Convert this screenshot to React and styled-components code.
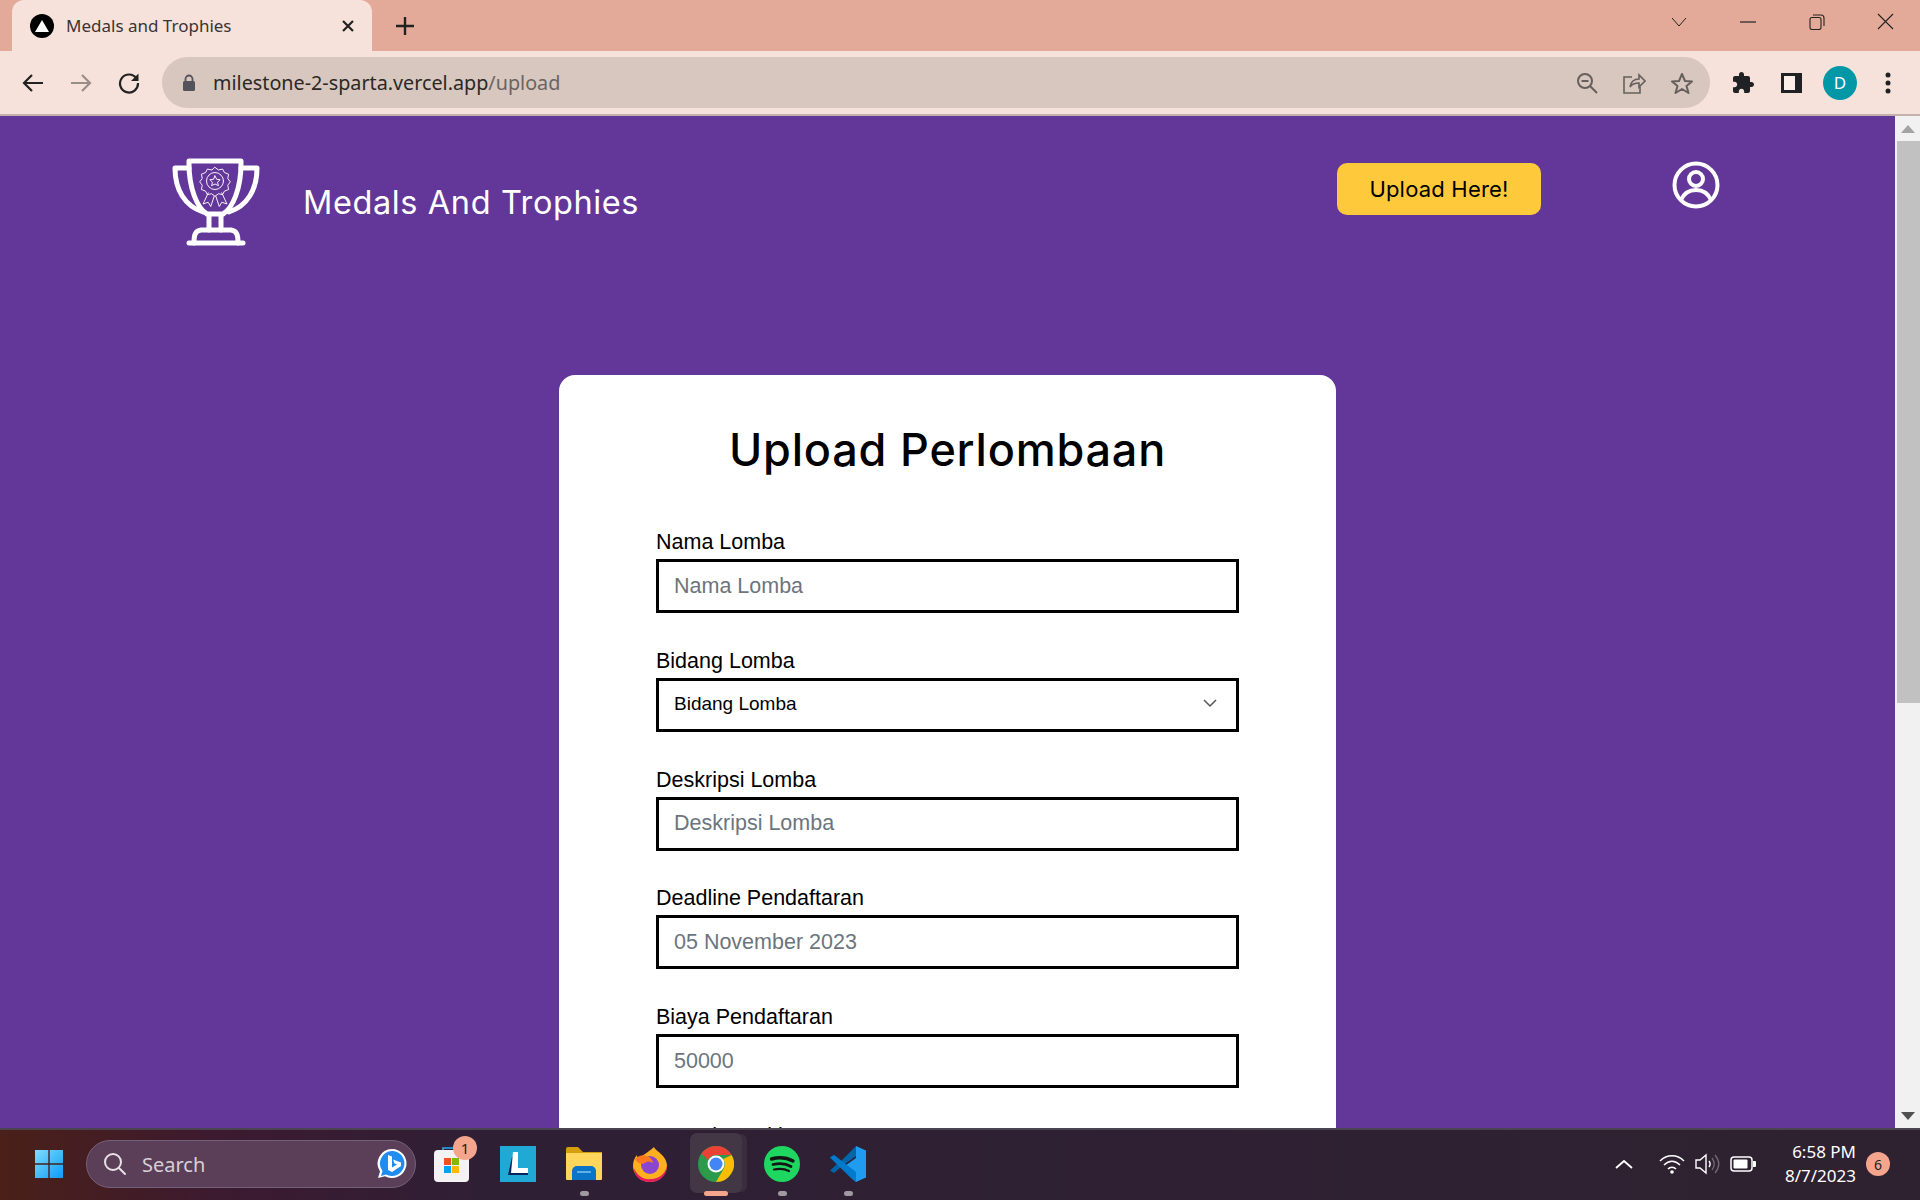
import styled, { createGlobalStyle } from "styled-components";

const fields = [
  { label: "Nama Lomba", placeholder: "Nama Lomba" },
  { label: "Bidang Lomba", select: true },
  { label: "Deskripsi Lomba", placeholder: "Deskripsi Lomba" },
  { label: "Deadline Pendaftaran", placeholder: "05 November 2023" },
  { label: "Biaya Pendaftaran", placeholder: "50000" },
  { label: "Kontak Panitia", placeholder: "Kontak Panitia" },
];

function Trophy() {
  return (
    <svg width="88" height="88" viewBox="0 0 88 88" fill="none" stroke="#fff" strokeLinejoin="round" strokeLinecap="round">
      <g strokeWidth="5">
        <path d="M17 3h52v3c0 24-8 44-18 50H35C25 50 17 30 17 6z" />
        <path d="M17 10H3c0 22 10 38 28 44" />
        <path d="M69 10h16c0 22-10 38-28 44" />
        <path d="M37 57v15M49 57v15" />
        <path d="M22 85c0-8 1-12 7-13h30c6 1 7 5 7 13" />
        <path d="M17 85h54" />
      </g>
      <g strokeWidth="1.100" transform="translate(43 23) scale(.85) translate(-43 -26)">
        <path d="M43 10l4 3 5-1 2 4 5 2-1 5 3 4-3 4 1 5-5 2-2 4-5-1-4 3-4-3-5 1-2-4-5-2 1-5-3-4 3-4-1-5 5-2 2-4 5 1z" />
        <circle cx="43" cy="26" r="10" />
        <path d="M43 20l2 4 4 .5-3 3 1 4-4-2-4 2 1-4-3-3 4-.5z" />
        <path d="M35 40l-6 13 6-2 3 5 4-12M51 40l6 13-6-2-3 5-4-12" />
      </g>
    </svg>
  );
}

function App() {
  return (
    <>
      <GlobalStyle />
      <Screen>
        <TabStrip>
          <Tab>
            <Favicon><svg width="14" height="12" viewBox="0 0 14 12"><path d="M7 0l7 12H0z" fill="#fff" /></svg></Favicon>
            <TabTitle>Medals and Trophies</TabTitle>
            <svg width="14" height="14" viewBox="0 0 14 14" stroke="#222" strokeWidth="2.2"><path d="M2 2l10 10M12 2L2 12" /></svg>
          </Tab>
          <NewTab>
            <svg width="20" height="20" viewBox="0 0 20 20" stroke="#222" strokeWidth="2.4"><path d="M10 1v18M1 10h18" /></svg>
          </NewTab>
          <WindowControls>
            <WinBtn><svg width="18" height="12" viewBox="0 0 18 12" fill="none" stroke="#222"><path d="M2 2l7 8 7-8" /></svg></WinBtn>
            <WinBtn><svg width="16" height="4" viewBox="0 0 16 4" stroke="#222" strokeWidth="1.2"><path d="M0 2h16" /></svg></WinBtn>
            <WinBtn><svg width="16" height="16" viewBox="0 0 16 16" fill="none" stroke="#222" strokeWidth="1.1"><rect x="1" y="3.5" width="11" height="12" rx="2" /><path d="M4 1h8a3 3 0 0 1 3 3v8" /></svg></WinBtn>
            <WinBtn><svg width="17" height="17" viewBox="0 0 17 17" stroke="#222" strokeWidth="1.1"><path d="M1 1l15 15M16 1L1 16" /></svg></WinBtn>
          </WindowControls>
        </TabStrip>

        <Toolbar>
          <NavGroup>
            <NavBtn><svg width="22" height="20" viewBox="0 0 22 20" fill="none" stroke="#222" strokeWidth="2.2"><path d="M21 10H2M10 2l-8 8 8 8" /></svg></NavBtn>
            <NavBtn><svg width="22" height="20" viewBox="0 0 22 20" fill="none" stroke="#9a8d88" strokeWidth="2.2"><path d="M1 10h19M12 2l8 8-8 8" /></svg></NavBtn>
            <NavBtn><svg width="22" height="22" viewBox="0 0 22 22" fill="none" stroke="#222" strokeWidth="2.2"><path d="M18.5 6.5A9 9 0 1 0 20 11" /><path d="M20.5 1.500v7.500H13z" fill="#222" stroke="none" /></svg></NavBtn>
          </NavGroup>
          <AddressBar>
            <svg width="14" height="18" viewBox="0 0 14 18"><path d="M3.5 7V5a3.5 3.5 0 0 1 7 0v2" fill="none" stroke="#55535a" strokeWidth="1.8" /><rect y="7" x="1" width="12" height="10" rx="1.5" fill="#55535a" /></svg>
            <Url>milestone-2-sparta.vercel.app<UrlPath>/upload</UrlPath></Url>
            <AddressIcons>
              <svg width="22" height="22" viewBox="0 0 22 22" fill="none" stroke="#665f5c" strokeWidth="2"><circle cx="9" cy="9" r="7" /><path d="M5.5 9h7M14 14l7 7" /></svg>
              <svg width="24" height="22" viewBox="0 0 24 22" fill="none" stroke="#665f5c" strokeWidth="1.6"><path d="M10 5H2v16h16v-6" /><path d="M8 15c1-6 5-8 9-8V3l6 6-6 6v-4c-4 0-7 1-9 4z" /></svg>
              <svg width="24" height="22" viewBox="0 0 24 22" fill="none" stroke="#665f5c" strokeWidth="2" strokeLinejoin="round"><path d="M12 2l3 7 7 .5-5.500 4.500 2 7-6.500-4-6.500 4 2-7L2 9.500 9 9z" /></svg>
            </AddressIcons>
          </AddressBar>
          <ToolIcons>
            <svg width="24" height="24" viewBox="0 0 24 24" fill="#202124"><path d="M20.500 11H19V7c0-1.100-.9-2-2-2h-4V3.500C13 2.120 11.880 1 10.500 1S8 2.120 8 3.500V5H4c-1.100 0-1.990.9-1.990 2v3.800H3.500c1.490 0 2.700 1.210 2.700 2.700s-1.210 2.700-2.700 2.700H2V20c0 1.100.9 2 2 2h3.800v-1.500c0-1.490 1.210-2.700 2.700-2.700 1.490 0 2.700 1.210 2.700 2.700V22H17c1.100 0 2-.9 2-2v-4h1.500c1.380 0 2.500-1.120 2.500-2.500S21.880 11 20.500 11z" /></svg>
            <svg width="21" height="20" viewBox="0 0 21 20"><path fill="#202124" d="M0 0h21v20H0z" /><path fill="#fbeee8" d="M3 3h11v14H3z" /></svg>
            <Avatar>D</Avatar>
            <svg width="6" height="22" viewBox="0 0 6 22" fill="#202124"><circle cx="3" cy="3" r="2.500" /><circle cx="3" cy="11" r="2.500" /><circle cx="3" cy="19" r="2.500" /></svg>
          </ToolIcons>
        </Toolbar>

        <Viewport>
          <Page>
            <Navbar>
              <Brand>
                <Trophy />
                <BrandName>Medals And Trophies</BrandName>
              </Brand>
              <NavActions>
                <UploadButton type="button">Upload Here!</UploadButton>
                <ProfileIcon width="48" height="48" viewBox="0 0 48 48" fill="none" stroke="#fff" strokeWidth="4"><circle cx="24" cy="24" r="21.500" /><circle cx="24" cy="18" r="7" /><path d="M9 39c3-7 9-10 15-10s12 3 15 10" /></ProfileIcon>
              </NavActions>
            </Navbar>
            <Card>
              <CardTitle>Upload Perlombaan</CardTitle>
              {fields.map((f) => (
                <Field key={f.label}>
                  <Label>{f.label}</Label>
                  {f.select ? (
                    <SelectBox>
                      Bidang Lomba
                      <svg width="14" height="9" viewBox="0 0 14 9" fill="none" stroke="#555" strokeWidth="1.500"><path d="M1 1l6 6 6-6" /></svg>
                    </SelectBox>
                  ) : (
                    <Input placeholder={f.placeholder} readOnly />
                  )}
                </Field>
              ))}
            </Card>
          </Page>
          <Scrollbar>
            <ScrollBtn><svg width="14" height="8" viewBox="0 0 14 8"><path d="M7 0l7 8H0z" fill="#a3a3a3" /></svg></ScrollBtn>
            <ScrollTrack><ScrollThumb /></ScrollTrack>
            <ScrollBtn><svg width="14" height="8" viewBox="0 0 14 8"><path d="M0 0h14L7 8z" fill="#505050" /></svg></ScrollBtn>
          </Scrollbar>
        </Viewport>

        <Taskbar>
          <StartLogo>
            <svg width="28" height="28" viewBox="0 0 28 28"><defs><linearGradient id="win" x1="0" y1="0" x2="1" y2="1"><stop offset="0" stopColor="#7fdcff" /><stop offset="1" stopColor="#0f9bf5" /></linearGradient></defs><path fill="url(#win)" d="M0 0h13.300v13.300H0zM14.700 0H28v13.300H14.700zM0 14.700h13.300V28H0zM14.700 14.700H28V28H14.700z" /></svg>
          </StartLogo>
          <SearchPill>
            <svg width="24" height="24" viewBox="0 0 24 24" fill="none" stroke="#e8e2e6" strokeWidth="2"><circle cx="10" cy="10" r="8" /><path d="M16 16l6 6" strokeLinecap="round" /></svg>
            <SearchText>Search</SearchText>
            <svg width="32" height="32" viewBox="0 0 32 32"><path fill="#fff" d="M16 1a14.500 14.500 0 1 1-7 27.200L2 30l2-6.500A14.500 14.500 0 0 1 16 1z" /><path fill="#1f8df0" d="M16 3a12.500 12.500 0 1 1-6 23.500L5 28l1.500-5A12.500 12.500 0 0 1 16 3z" /><path fill="#fff" d="M12 7l4 1.500v11l5-3-2.500-1-1.500-4 8 3v3.500L16 24l-4-2z" /></svg>
          </SearchPill>
          <Apps>
            <AppSlot>
              <svg width="36" height="36" viewBox="0 0 36 36"><path d="M9 6V2h16v4" fill="none" stroke="#2fa8e8" strokeWidth="1.600" /><rect y="4" width="35" height="32" rx="4" fill="#f4f2f2" /><path fill="#f25022" d="M10 12h7v7h-7z" /><path fill="#7fba00" d="M18 12h7v7h-7z" /><path fill="#00a4ef" d="M10 20h7v7h-7z" /><path fill="#ffb900" d="M18 20h7v7h-7z" /></svg>
              <StoreBadge>1</StoreBadge>
            </AppSlot>
            <AppSlot>
              <svg width="36" height="36" viewBox="0 0 36 36"><path fill="#21a9d6" d="M0 0h36v36H0z" /><path fill="#08245c" d="M12 11h2l-1 15h15v3H8z" /><path fill="#fff" d="M13 6h5v16h10v5H11z" /></svg>
            </AppSlot>
            <AppSlot $dot>
              <svg width="36" height="34" viewBox="0 0 36 34"><path fill="#d69e0b" d="M0 2a2 2 0 0 1 2-2h10l5 5h19v8H0z" /><path fill="#ffd65c" d="M0 6h36v26a1 1 0 0 1-1 1H1a1 1 0 0 1-1-1z" /><path fill="#0a74c9" d="M6 33V24a5 5 0 0 1 5-5h14a5 5 0 0 1 5 5v9z" /><path stroke="#7cc4f0" strokeWidth="1.500" d="M11 25h14" /></svg>
            </AppSlot>
            <AppSlot>
              <svg width="36" height="36" viewBox="0 0 36 36"><path fill="#ffb01f" d="M22 1c1 4 13 8 13 19a17 16 0 1 1-34 0c0-4 1-8 4-11 0 3 1 4 2 5 2-5 9-7 15-13z" /><path fill="#e31d60" d="M2 22c3 8 10 12 17 11 8 0 14-5 16-13 0 9-7 16-17 16S2 30 2 22z" /><circle cx="18" cy="19" r="9" fill="#8b46cf" /><path fill="#ff7a1f" d="M3 13c3-3 8-5 12-3 3 1 6 4 6 7-3-2-6-2-8 0-3 2-8 0-10-4z" /></svg>
            </AppSlot>
            <ChromeSlot>
              <svg width="36" height="36" viewBox="0 0 36 36"><circle cx="18" cy="18" r="18" fill="#2b9a4a" /><path fill="#ea4335" d="M18 0a18 18 0 0 1 15.600 9H18a9 9 0 0 0-8 5L3.500 7.500A18 18 0 0 1 18 0z" /><path fill="#fbbc04" d="M33.600 9A18 18 0 0 1 18 36l7.800-13.500A9 9 0 0 0 25 13z" /><circle cx="18" cy="18" r="8.500" fill="#fff" /><circle cx="18" cy="18" r="6.500" fill="#4285f4" /></svg>
            </ChromeSlot>
            <AppSlot $dot>
              <svg width="36" height="36" viewBox="0 0 36 36" fill="none" strokeLinecap="round"><circle cx="18" cy="18" r="18" fill="#1ed760" /><path stroke="#151515" strokeWidth="3.400" d="M7.500 13c7-2 15-1.500 21.500 2" /><path stroke="#151515" strokeWidth="2.800" d="M9 18.500c6-1.500 13-1 18 2" /><path stroke="#151515" strokeWidth="2.200" d="M10 23.500c5-1 11-.6 15 1.500" /></svg>
            </AppSlot>
            <AppSlot $dot>
              <svg width="36" height="36" viewBox="0 0 36 36"><path fill="#1f9cf0" d="M26 0l10 4.500v27L26 36 12 22l14-10z" /><path fill="#0065a9" d="M26 10L11 21l-7 6-4-2.500L7 18 0 11.500 4 9l7 6 15-15 0 2z" /><path fill="#007acc" d="M26 26L4 9 0 11.500 22 33l4 3z" /></svg>
            </AppSlot>
          </Apps>
          <Tray>
            <svg width="18" height="10" viewBox="0 0 18 10" fill="none" stroke="#fff" strokeWidth="1.800"><path d="M1 9l8-7 8 7" /></svg>
            <TrayIcons>
              <svg width="26" height="20" viewBox="0 0 26 20" fill="none" stroke="#fff" strokeWidth="1.500"><path d="M1 7c7-7 17-7 24 0M5 11c5-5 11-5 16 0M9 15c2-2.500 6-2.500 8 0" /><circle cx="13" cy="18" r="1.800" fill="#fff" stroke="none" /></svg>
              <svg width="25" height="22" viewBox="0 0 25 22" fill="none" stroke="#fff" strokeWidth="1.400"><path d="M1 7h4l6-5v18l-6-5H1z" /><path d="M14 8c1.500 2 1.500 4 0 6" /><path stroke="#6e6570" d="M17 5c3 4 3 8 0 12M20 2c5 6 5 12 0 18" /></svg>
              <svg width="26" height="16" viewBox="0 0 26 16" fill="none"><rect x="1" y="1" width="21" height="14" rx="3" stroke="#fff" strokeWidth="1.500" /><rect x="3.500" y="3.500" width="14" height="9" rx="1" fill="#fff" /><path fill="#fff" d="M23 5h2a1 1 0 0 1 1 1v4a1 1 0 0 1-1 1h-2z" /></svg>
            </TrayIcons>
            <Clock>
              <span>6:58 PM</span>
              <span>8/7/2023</span>
            </Clock>
            <NotifBadge>6</NotifBadge>
          </Tray>
        </Taskbar>
      </Screen>
    </>
  );
}

const GlobalStyle = createGlobalStyle`
  * { box-sizing: border-box; }
  html, body { margin: 0; height: 100%; overflow: hidden; }
  body { font-family: "Liberation Sans", Arial, sans-serif; }
`;

const Screen = styled.div`
  width: 1920px;
  height: 1200px;
  display: flex;
  flex-direction: column;
  overflow: hidden;
`;

const TabStrip = styled.div`
  height: 51px;
  flex: none;
  display: flex;
  align-items: flex-end;
  padding-left: 12px;
  background: #e3aa99;
`;

const Tab = styled.div`
  width: 360px;
  height: 51px;
  display: flex;
  align-items: center;
  padding: 0 17px 0 18px;
  gap: 12px;
  background: #f6e2da;
  border-radius: 12px 12px 0 0;
`;

const Favicon = styled.span`
  width: 24px;
  height: 24px;
  flex: none;
  display: flex;
  align-items: center;
  justify-content: center;
  border-radius: 50%;
  background: #000;
`;

const TabTitle = styled.span`
  flex: 1;
  font-family: "Noto Sans", sans-serif;
  font-size: 17px;
  color: #3a3432;
`;

const NewTab = styled.span`
  width: 66px;
  height: 51px;
  display: flex;
  align-items: center;
  justify-content: center;
`;

const WindowControls = styled.div`
  margin-left: auto;
  height: 51px;
  display: flex;
  align-items: flex-start;
`;

const WinBtn = styled.span`
  width: 69px;
  height: 43px;
  display: flex;
  align-items: center;
  justify-content: center;
`;

const Toolbar = styled.div`
  height: 65px;
  flex: none;
  display: flex;
  align-items: flex-start;
  padding-top: 6px;
  background: #f6e2da;
  border-bottom: 2px solid #c5b1ab;
`;

const NavGroup = styled.div`
  width: 162px;
  height: 51px;
  display: flex;
  align-items: center;
  padding-left: 9px;
`;

const NavBtn = styled.span`
  width: 48px;
  display: flex;
  justify-content: center;
`;

const AddressBar = styled.div`
  width: 1548px;
  height: 51px;
  display: flex;
  align-items: center;
  padding: 0 16px 0 20px;
  background: #d8c7bf;
  border-radius: 26px;
`;

const Url = styled.span`
  margin-left: 17px;
  flex: 1;
  font-family: "Noto Sans", sans-serif;
  font-size: 19.750px;
  color: #2c2826;
`;

const UrlPath = styled.span`
  color: #6b6462;
`;

const AddressIcons = styled.div`
  display: flex;
  align-items: center;
  gap: 24px;
`;

const ToolIcons = styled.div`
  flex: 1;
  height: 51px;
  display: flex;
  align-items: center;
  gap: 26px;
  padding-left: 21px;
`;

const Avatar = styled.span`
  width: 34px;
  height: 34px;
  display: flex;
  align-items: center;
  justify-content: center;
  margin: 0 2px 0 -5px;
  border-radius: 50%;
  background: #0097a7;
  color: #fff;
  font-family: "Noto Sans", sans-serif;
  font-size: 17px;
`;

const Viewport = styled.div`
  flex: 1;
  min-height: 0;
  display: flex;
`;

const Page = styled.main`
  flex: 1;
  min-width: 0;
  overflow: hidden;
  background: #633799;
`;

const Navbar = styled.nav`
  display: flex;
  justify-content: space-between;
  align-items: flex-start;
  padding: 42px 175px 0 172px;
  height: 259px;
`;

const Brand = styled.div`
  display: flex;
  align-items: center;
  gap: 43px;
`;

const BrandName = styled.span`
  font-family: Inter, sans-serif;
  font-size: 32.500px;
  letter-spacing: 0.6px;
  font-weight: 400;
  color: #fff;
`;

const NavActions = styled.div`
  display: flex;
  align-items: flex-start;
  gap: 131px;
`;

const ProfileIcon = styled.svg`
  margin-top: 3px;
`;

const UploadButton = styled.button`
  width: 204px;
  height: 52px;
  margin-top: 5px;
  border: none;
  border-radius: 10px;
  background: #ffc93c;
  color: #000;
  font-family: Inter, sans-serif;
  font-size: 22px;
  letter-spacing: 0.2px;
`;

const Card = styled.section`
  width: 777px;
  margin-left: 559px;
  padding: 46px 97px 0;
  background: #fff;
  border-radius: 16px 16px 0 0;
  height: 1000px;
`;

const CardTitle = styled.h1`
  margin: 0 0 50px;
  text-align: center;
  font-family: Inter, sans-serif;
  font-size: 45px;
  letter-spacing: 0.8px;
  line-height: 58px;
  font-weight: 500;
  color: #000;
`;

const Field = styled.div`
  display: flex;
  flex-direction: column;
  margin-bottom: 34.800px;
`;

const Label = styled.label`
  height: 30px;
  font-size: 21.500px;
  line-height: 26px;
  color: #000;
`;

const Input = styled.input`
  width: 583px;
  height: 54px;
  padding: 0 18px 0 15px;
  border: 3px solid #000;
  border-radius: 0;
  outline: none;
  font-family: "Liberation Sans", Arial, sans-serif;
  font-size: 21.500px;
  &::placeholder { color: #6c757d; opacity: 1; }
`;

const SelectBox = styled.div`
  width: 583px;
  height: 54px;
  display: flex;
  align-items: center;
  justify-content: space-between;
  padding: 0 19px 2px 15px;
  border: 3px solid #000;
  font-size: 19px;
  color: #000;
`;

const Scrollbar = styled.div`
  width: 25px;
  flex: none;
  display: flex;
  flex-direction: column;
  background: #f1f1f1;
`;

const ScrollBtn = styled.span`
  height: 25px;
  flex: none;
  display: flex;
  align-items: center;
  justify-content: center;
`;

const ScrollTrack = styled.div`
  flex: 1;
  padding-left: 2px;
`;

const ScrollThumb = styled.div`
  height: 562px;
  background: #c1c1c1;
`;

const Taskbar = styled.footer`
  height: 72px;
  flex: none;
  display: flex;
  align-items: center;
  padding: 0 0 2px 35px;
  border-top: 2px solid #4a4350;
  background: linear-gradient(90deg, #4a2018 0, #3c1a30 220px, #2f1f35 480px, #2e2230 100%);
`;

const StartLogo = styled.span`
  display: flex;
  margin-right: 23px;
`;

const SearchPill = styled.div`
  width: 330px;
  height: 48px;
  display: flex;
  align-items: center;
  gap: 15px;
  padding: 0 7px 0 16px;
  border: 1px solid #75607a;
  border-radius: 24px;
  background: #5b3f58;
`;

const SearchText = styled.span`
  flex: 1;
  font-family: "Noto Sans", sans-serif;
  font-size: 20px;
  color: #d8d0d6;
`;

const Apps = styled.div`
  display: flex;
  margin-left: 3px;
`;

const AppSlot = styled.span`
  position: relative;
  width: 66px;
  height: 70px;
  display: flex;
  align-items: center;
  justify-content: center;
  &::after {
    content: "";
    display: ${(p) => (p.$dot ? "block" : "none")};
    position: absolute;
    left: 29px;
    bottom: 3px;
    width: 9px;
    height: 5px;
    border-radius: 3px;
    background: #a09aa0;
  }
`;

const ChromeSlot = styled(AppSlot)`
  &::before {
    content: "";
    position: absolute;
    left: 7px;
    top: 4px;
    width: 52px;
    height: 60px;
    border-radius: 7px;
    background: #433746;
    box-shadow: 6px 0 0 -1px #3a2e3d;
    z-index: 0;
  }
  &::after {
    display: block;
    left: 21px;
    bottom: 3px;
    width: 24px;
    height: 5px;
    background: #f4a58c;
  }
  svg { position: relative; z-index: 1; }
`;

const StoreBadge = styled.span`
  position: absolute;
  left: 34px;
  top: 7px;
  width: 24px;
  height: 24px;
  display: flex;
  align-items: center;
  justify-content: center;
  border-radius: 50%;
  background: #f4a58c;
  color: #222;
  font-family: "Noto Sans", sans-serif;
  font-size: 15px;
`;

const Tray = styled.div`
  margin-left: auto;
  display: flex;
  align-items: center;
  padding-right: 30px;
`;

const TrayIcons = styled.div`
  display: flex;
  align-items: center;
  gap: 10px;
  margin-left: 26px;
`;

const Clock = styled.div`
  display: flex;
  flex-direction: column;
  align-items: flex-end;
  margin-left: 29px;
  font-family: "Noto Sans", sans-serif;
  font-size: 17px;
  line-height: 24px;
  color: #fff;
`;

const NotifBadge = styled.span`
  width: 24px;
  height: 24px;
  margin-left: 10px;
  display: flex;
  align-items: center;
  justify-content: center;
  border-radius: 50%;
  background: #f4a58c;
  color: #222;
  font-family: "Noto Sans", sans-serif;
  font-size: 14px;
`;

export default App;
